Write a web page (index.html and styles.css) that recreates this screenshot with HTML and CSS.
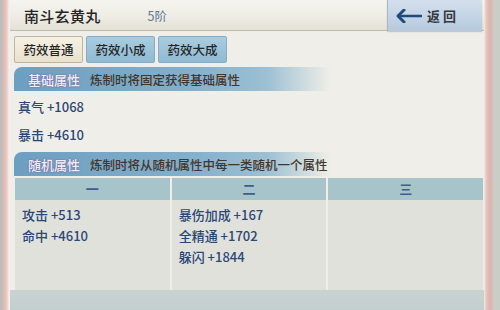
FILE: index.html
```html
<!DOCTYPE html>
<html lang="zh">
<head>
<meta charset="utf-8">
<link rel="stylesheet" href="styles.css">
</head>
<body>
<div class="screen">
  <div class="edge-left"></div>
  <div class="frame-left"></div>
  <div class="middle">
    <div class="panel">
      <div class="header">
        <div class="title">南斗玄黄丸</div>
        <div class="rank">5阶</div>
        <div class="back">
          <svg class="arrow" width="26" height="14" viewBox="0 0 26 14">
            <path d="M8 1 L2 7 L8 13" fill="none" stroke="#1f4b7a" stroke-width="3" stroke-linecap="round" stroke-linejoin="round"/>
            <path d="M3 7 H25" stroke="#1f4b7a" stroke-width="2.6" stroke-linecap="round"/>
          </svg>
          <span class="back-text">返 回</span>
        </div>
      </div>
      <div class="content">
        <div class="tabs">
          <div class="tab active">药效普通</div>
          <div class="tab">药效小成</div>
          <div class="tab">药效大成</div>
        </div>
        <div class="section">
          <span class="label">基础属性</span>
          <span class="desc">炼制时将固定获得基础属性</span>
        </div>
        <div class="stats">
          <div class="stat">真气 +1068</div>
          <div class="stat">暴击 +4610</div>
        </div>
        <div class="section section-2">
          <span class="label">随机属性</span>
          <span class="desc">炼制时将从随机属性中每一类随机一个属性</span>
        </div>
        <div class="table">
          <div class="col">
            <div class="col-head">一</div>
            <div class="col-body">
              <div class="entry">攻击 +513</div>
              <div class="entry">命中 +4610</div>
            </div>
          </div>
          <div class="col">
            <div class="col-head">二</div>
            <div class="col-body">
              <div class="entry">暴伤加成 +167</div>
              <div class="entry">全精通 +1702</div>
              <div class="entry">躲闪 +1844</div>
            </div>
          </div>
          <div class="col">
            <div class="col-head">三</div>
            <div class="col-body"></div>
          </div>
        </div>
      </div>
    </div>
    <div class="footer"></div>
  </div>
  <div class="frame-right"></div>
  <div class="edge-right"></div>
</div>
</body>
</html>
```

FILE: styles.css
```css
html, body {
  margin: 0;
  padding: 0;
}
body {
  width: 500px;
  height: 310px;
  overflow: hidden;
  font-family: "Noto Sans CJK SC", "Noto Sans", sans-serif;
  background: #c6d0d0;
}
.screen {
  display: flex;
  width: 500px;
  height: 310px;
}
.edge-left {
  width: 2px;
  background: #b9bfbc;
}
.frame-left {
  width: 8px;
  background: linear-gradient(to right, #d9b5b0 0%, #e8c9c4 60%, #f3e6e2 80%, #f6f1ec 100%);
}
.middle {
  flex: 1;
  display: flex;
  flex-direction: column;
}
.panel {
  height: 290px;
  display: flex;
  flex-direction: column;
  background: #efeee8;
}
.footer {
  flex: 1;
  background: linear-gradient(to bottom, #c9d3d2, #c3cecf);
}
.frame-right {
  width: 9px;
  background: linear-gradient(to right, #f3ebe6 0%, #e6c6c0 25%, #ddb4ae 60%, #d9bcb6 100%);
}
.edge-right {
  width: 7px;
  background: #c9cdc5;
}

/* header */
.header {
  height: 30px;
  display: flex;
  align-items: center;
  background: linear-gradient(to bottom, #f5f4ef 0%, #efede5 50%, #e4e1d6 100%);
  border-bottom: 1px solid #bfbaa9;
}
.title {
  margin-left: 14px;
  font-size: 15px;
  font-weight: 500;
  color: #262626;
  letter-spacing: 0.3px;
}
.rank {
  margin-left: 47px;
  font-size: 12.5px;
  color: #617797;
}
.back {
  margin-left: auto;
  margin-right: 2px;
  width: 94px;
  height: 31px;
  align-self: flex-start;
  display: flex;
  align-items: center;
  background: linear-gradient(to bottom, #d3dfec 0%, #c3d3e5 60%, #b6c8dc 100%);
  border-left: 1px solid #a9b7c4;
  box-shadow: 0 1px 1px rgba(120, 130, 140, 0.35);
}
.arrow {
  margin-left: 8px;
}
.back-text {
  margin-left: 5px;
  font-size: 13px;
  font-weight: bold;
  color: #35393f;
}

/* content */
.content {
  padding: 5px 1px 0 4px;
  display: flex;
  flex-direction: column;
}
.tabs {
  display: flex;
  gap: 3px;
}
.tab {
  width: 67px;
  height: 25px;
  display: flex;
  align-items: center;
  justify-content: center;
  font-size: 12.5px;
  font-weight: 500;
  color: #262626;
  background: linear-gradient(to bottom, #a9cde0, #8fbad3);
  border: 1px solid #86adc4;
  border-radius: 2px;
}
.tab.active {
  background: linear-gradient(to bottom, #f6f1e4, #e9e1cd);
  border-color: #bfb59e;
}

.section {
  margin-top: 4px;
  width: 316px;
  height: 24px;
  display: flex;
  align-items: center;
  border-top-left-radius: 8px;
  background: linear-gradient(to right, #6d9fc1 0%, #82afcc 55%, #9cc0d3 80%, rgba(239, 238, 232, 0) 100%);
}
.section-2 {
  margin-top: 3px;
}
.label {
  margin-left: 14px;
  font-size: 13px;
  font-weight: 500;
  color: #f1eef8;
  text-shadow: 0 0 1px #6d5f93, 0 0 2px #7b6ea0;
}
.desc {
  margin-left: 10px;
  font-size: 12.5px;
  font-weight: 500;
  color: #45352b;
  white-space: nowrap;
}

.stats {
  padding-top: 2px;
}
.stat {
  height: 28px;
  line-height: 28px;
  padding-left: 4px;
  font-size: 13px;
  font-weight: 500;
  color: #2b4776;
}

.table {
  margin-top: 2px;
  margin-left: 1px;
  height: 112px;
  display: flex;
  gap: 2px;
}
.col {
  flex: 1;
  display: flex;
  flex-direction: column;
  background: #e0e1db;
}
.col-head {
  height: 22px;
  line-height: 22px;
  text-align: center;
  font-size: 13px;
  font-weight: bold;
  color: #3d5e92;
  background: #a8c4cb;
}
.col-body {
  flex: 1;
  padding: 4px 0 0 7px;
}
.entry {
  height: 21px;
  line-height: 21px;
  font-size: 13px;
  font-weight: 500;
  color: #2b4776;
  white-space: nowrap;
}
```
